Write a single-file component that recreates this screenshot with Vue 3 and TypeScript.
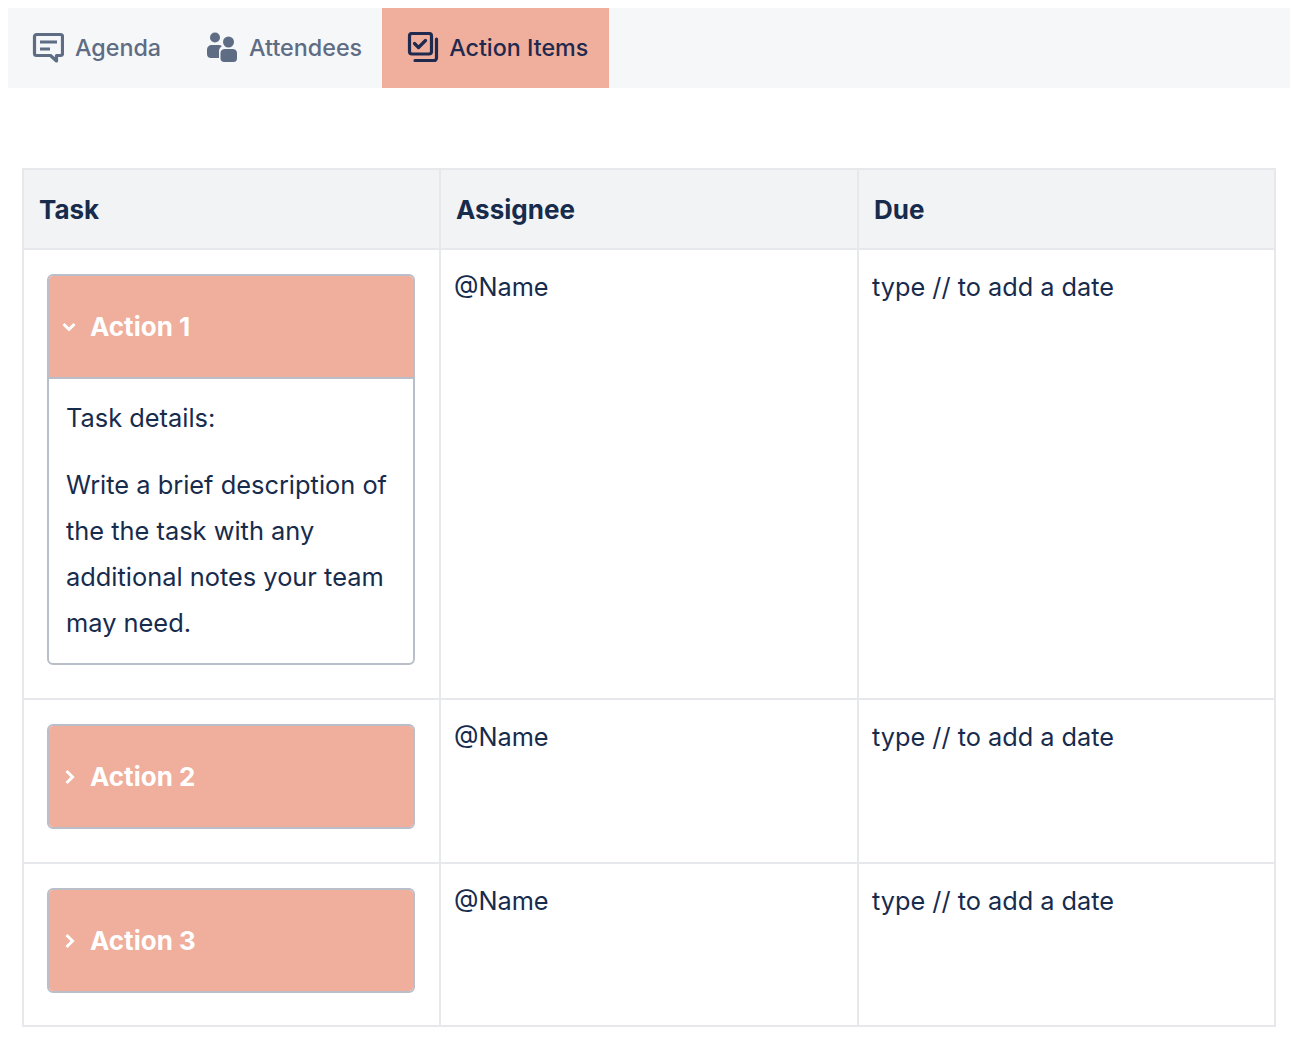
<script setup lang="ts">
const tabs = ['Agenda', 'Attendees', 'Action Items']
const rows = [
  { id: 1, label: 'Action 1', open: true },
  { id: 2, label: 'Action 2', open: false },
  { id: 3, label: 'Action 3', open: false },
]
</script>

<template>
  <div class="page">
    <nav class="tabs">
      <div v-for="(t, i) in tabs" :key="t" class="tab" :class="['tab' + i, { active: i === 2 }]">
        <svg v-if="i === 0" class="icon" viewBox="0 0 32 32" width="32" height="32" fill="none" stroke="currentColor">
          <path d="M4.500 2.500h24a2 2 0 0 1 2 2v17a2 2 0 0 1-2 2H24.500v5.500L18.500 23.500H4.500a2 2 0 0 1-2-2v-17a2 2 0 0 1 2-2z" stroke-width="3.200" stroke-linejoin="round" />
          <path d="M8 10h17M8 17h10" stroke-width="3" />
        </svg>
        <svg v-else-if="i === 1" class="icon" viewBox="0 0 32 32" width="32" height="32" fill="currentColor">
          <circle cx="10" cy="5.500" r="5" />
          <circle cx="23.500" cy="10" r="5.500" />
          <path d="M2 18c0-3 2-5 5-5h7c1 0 2 .3 2.800 1-.5 1-2.800 2-2.800 5.500V26H6c-2.500 0-4-1.500-4-4z" />
          <path d="M15.500 21c0-2.500 2-4 4.500-4h7.500c2.500 0 4.500 1.500 4.500 4v5.500c0 2.500-1.500 3.500-3.500 3.500H19c-2 0-3.500-1.200-3.500-3.500z" />
        </svg>
        <svg v-else class="icon" viewBox="0 0 32 32" width="32" height="32" fill="none" stroke="currentColor" stroke-width="3.200">
          <rect x="2.500" y="1.500" width="22" height="20.500" rx="2.500" />
          <path d="M7.500 11.500l4 4 7-7" stroke-linecap="round" stroke-linejoin="round" />
          <path d="M29.500 7v19a2.500 2.500 0 0 1-2.500 2.500H8" stroke-linecap="round" />
        </svg>
        <span class="tab-label">{{ t }}</span>
      </div>
    </nav>

    <div class="table">
      <div class="head cell">Task</div>
      <div class="head cell">Assignee</div>
      <div class="head cell">Due</div>
      <template v-for="r in rows" :key="r.id">
        <div class="cell task">
          <div class="expand" :class="{ open: r.open }">
            <div class="expand-title">
              <svg viewBox="0 0 20 20" width="20" height="20" fill="none" stroke="currentColor" stroke-width="3">
                <path v-if="r.open" d="M4.500 7L10 12.500 15.500 7" />
                <path v-else d="M7.500 4L13.500 10 7.500 16" />
              </svg>
              <span>{{ r.label }}</span>
            </div>
            <div v-if="r.open" class="expand-body">
              <p>Task details:</p>
              <p>Write a brief description of the the task with any additional notes your team may need.</p>
            </div>
          </div>
        </div>
        <div class="cell body">@Name</div>
        <div class="cell body">type // to add a date</div>
      </template>
    </div>
  </div>
</template>

<style>
html, body { margin: 0; background: #fff; }
</style>

<style scoped>
.page {
  box-sizing: border-box;
  width: 1296px;
  height: 1045px;
  padding: 8px 6px 0 8px;
  font-family: Inter, "Noto Sans", sans-serif;
  color: #172b4d;
  overflow: hidden;
}
.tabs {
  display: flex;
  height: 80px;
  background: #f6f7f9;
  padding-left: 8px;
}
.tab {
  display: flex;
  align-items: center;
  font-size: 23.3px;
  color: #5e6c84;
  font-weight: 500;
}
.tab-label { padding-bottom: 2px; }
.tab0 { gap: 11px; padding: 0 23px 0 16px; }
.tab1 { gap: 12px; padding: 0 20px 0 21px; }
.tab.active {
  gap: 10px;
  padding: 0 21px 0 25px;
  background: #f0ae9c;
  color: #1f2a4e;
}
.icon { flex: none; }
.table {
  box-sizing: border-box;
  display: grid;
  grid-template-columns: 417px 418px 417px;
  grid-template-rows: 80px 450px 164px 163px;
  width: 1254px;
  margin: 80px 0 0 14px;
  border-top: 2px solid #e6e8eb;
  border-left: 2px solid #e6e8eb;
}
.cell {
  box-sizing: border-box;
  border-right: 2px solid #e6e8eb;
  border-bottom: 2px solid #e6e8eb;
}
.head {
  display: flex;
  align-items: center;
  padding-left: 15px;
  background: #f2f3f5;
  font-size: 26px;
  font-weight: 700;
}
.body {
  padding: 19px 0 0 13px;
  font-size: 25.3px;
  line-height: 36px;
}
.task { padding: 24px 23px 0; }
.expand {
  box-sizing: border-box;
  width: 368px;
  border: 2px solid #b9bec9;
  border-radius: 6px;
  overflow: hidden;
}
.expand-title {
  display: flex;
  align-items: center;
  gap: 11px;
  height: 101px;
  padding-left: 10px;
  background: #f0ae9c;
  color: #fff;
  font-size: 26px;
  font-weight: 700;
}
.expand-body {
  padding: 16px 15px 17px 17px;
  border-top: 2px solid #b9bec9;
}
.expand-body p {
  margin: 0;
  font-size: 25.4px;
  line-height: 46px;
}
.expand-body p + p { margin-top: 21px; }
</style>
